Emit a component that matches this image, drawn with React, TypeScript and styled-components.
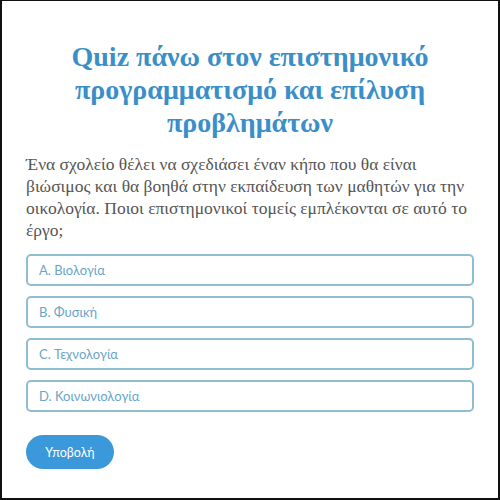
import React from "react";
import styled, { createGlobalStyle } from "styled-components";

const Global = createGlobalStyle`
  html, body { margin: 0; padding: 0; background: #fff; }
  * { box-sizing: border-box; }
`;

const Frame = styled.div`
  width: 500px;
  height: 500px;
  border: 2px solid #111;
  border-top-width: 1px;
  background: #fff;
  padding: 39px 24px 0 24px;
  display: flex;
  flex-direction: column;
`;

const Title = styled.h1`
  margin: 0;
  font-family: "Liberation Serif", "Times New Roman", serif;
  font-weight: bold;
  font-size: 28px;
  line-height: 33px;
  color: #3b8fc9;
  text-align: center;
  padding: 0 30px;
`;

const Question = styled.p`
  margin: 14px 0 0 0;
  font-family: "Liberation Serif", "Times New Roman", serif;
  font-size: 17.5px;
  line-height: 22px;
  color: #555;
`;

const Options = styled.div`
  margin-top: 13px;
  display: flex;
  flex-direction: column;
  gap: 10px;
`;

const Option = styled.button`
  height: 32px;
  width: 100%;
  border: 2px solid #8fbdd2;
  border-radius: 5px;
  background: #fff;
  text-align: left;
  padding: 0 11px;
  font-family: "Lato", "Noto Sans", sans-serif;
  font-size: 13px;
  color: #6aa5c9;
  cursor: pointer;
`;

const Submit = styled.button`
  margin-top: 23px;
  align-self: flex-start;
  width: 88px;
  height: 34px;
  border: none;
  border-radius: 17px;
  background: #3a98db;
  color: #fff;
  font-family: "Lato", "Noto Sans", sans-serif;
  font-size: 12.5px;
  cursor: pointer;
`;

const options = ["A. Βιολογία", "B. Φυσική", "C. Τεχνολογία", "D. Κοινωνιολογία"];

export default function App() {
  return (
    <>
      <Global />
      <Frame>
        <Title>Quiz πάνω στον επιστημονικό προγραμματισμό και επίλυση προβλημάτων</Title>
        <Question>
          Ένα σχολείο θέλει να σχεδιάσει έναν κήπο που θα είναι βιώσιμος και θα βοηθά στην
          εκπαίδευση των μαθητών για την οικολογία. Ποιοι επιστημονικοί τομείς εμπλέκονται σε
          αυτό το έργο;
        </Question>
        <Options>
          {options.map((o) => (
            <Option key={o}>{o}</Option>
          ))}
        </Options>
        <Submit>Υποβολή</Submit>
      </Frame>
    </>
  );
}
